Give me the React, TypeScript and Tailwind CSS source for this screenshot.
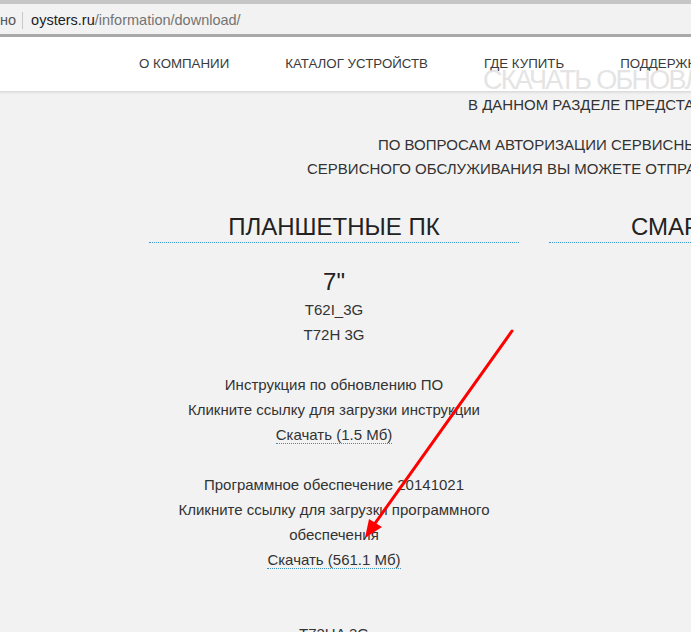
export default function App() {
  return (
    <div className="relative h-[632px] w-[691px] overflow-hidden bg-[#f2f2f2] font-['Liberation_Sans',Arial,sans-serif] text-[#333]">
      {/* browser chrome */}
      <div className="h-[4px] bg-[#c6c6c6]" />
      <div className="flex h-[30px] items-center whitespace-nowrap bg-[#f2f2f2] pt-[3px] text-[14.5px]">
        <span className="text-[#555]">но</span>
        <span className="ml-[6px] h-[17px] w-px bg-[#c8c8c8]" />
        <span className="ml-[8px] text-[#202124]">oysters.ru</span>
        <span className="text-[#747474]">/information/download/</span>
      </div>
      <div className="h-[3px] bg-[#a9a9a9]" />

      {/* site header */}
      <header className="relative h-[55px] border-b border-[#dcdcdc] bg-white shadow-[0_1px_2px_rgba(0,0,0,0.08)]">
        <nav className="flex h-full items-center gap-[56px] whitespace-nowrap pl-[139px] text-[13.3px] text-[#3a3a3a]">
          <a>О КОМПАНИИ</a>
          <a>КАТАЛОГ УСТРОЙСТВ</a>
          <a>ГДЕ КУПИТЬ</a>
          <a>ПОДДЕРЖКА</a>
        </nav>
        <div className="absolute left-[483px] top-[27px] whitespace-nowrap text-[27px] leading-[32px] tracking-[-1.7px] text-[#e4e4e4]">
          СКАЧАТЬ ОБНОВЛЕНИЯ
        </div>
      </header>

      {/* intro */}
      <div className="whitespace-nowrap text-[15px]">
        <p className="pt-[2px] pl-[468px] leading-[22px]">
          В ДАННОМ РАЗДЕЛЕ ПРЕДСТАВЛЕНЫ ОБНОВЛЕНИЯ ПРОГРАММНОГО ОБЕСПЕЧЕНИЯ
        </p>
        <p className="mt-[17px] pl-[378px] leading-[24px]">
          ПО ВОПРОСАМ АВТОРИЗАЦИИ СЕРВИСНЫХ ЦЕНТРОВ И
        </p>
        <p className="pl-[307px] leading-[24px]">
          СЕРВИСНОГО ОБСЛУЖИВАНИЯ ВЫ МОЖЕТЕ ОТПРАВИТЬ ЗАПРОС
        </p>
      </div>

      {/* columns */}
      <div className="mt-[32px] flex gap-[30px] pl-[149px]">
        <section className="w-[370px] shrink-0 text-center">
          <h2 className="border-b border-dotted border-[#3b9ad6] pb-px text-[24px] leading-[28px] text-[#222]">
            ПЛАНШЕТНЫЕ ПК
          </h2>
          <div className="mt-[25px] text-[24px] leading-[28px] text-[#222]">7"</div>
          <div className="mt-px text-[15px] leading-[25px]">
            <p>T62I_3G</p>
            <p>T72H 3G</p>
            <div className="mt-[25px]">
              <p>Инструкция по обновлению ПО</p>
              <p>Кликните ссылку для загрузки инструкции</p>
              <p>
                <a className="border-b border-dotted border-[#3b8fc4]">Скачать (1.5 Мб)</a>
              </p>
            </div>
            <div className="mt-[25px]">
              <p>Программное обеспечение 20141021</p>
              <p>Кликните ссылку для загрузки программного обеспечения</p>
              <p>
                <a className="border-b border-dotted border-[#3b8fc4]">Скачать (561.1 Мб)</a>
              </p>
            </div>
            <p className="mt-[49px]">T72HA 3G</p>
          </div>
        </section>
        <section className="w-[370px] shrink-0 text-center">
          <h2 className="border-b border-dotted border-[#3b9ad6] pb-px text-[24px] leading-[28px] text-[#222]">
            СМАРТФОНЫ LTE
          </h2>
        </section>
      </div>

      {/* red annotation arrow */}
      <svg className="pointer-events-none absolute left-0 top-0" width="691" height="632" viewBox="0 0 691 632">
        <line x1="512" y1="331" x2="371" y2="529" stroke="#ff0000" strokeWidth="3" strokeLinecap="round" />
        <polygon points="365,538 382,527 369,519" fill="#ff0000" />
      </svg>
    </div>
  );
}
